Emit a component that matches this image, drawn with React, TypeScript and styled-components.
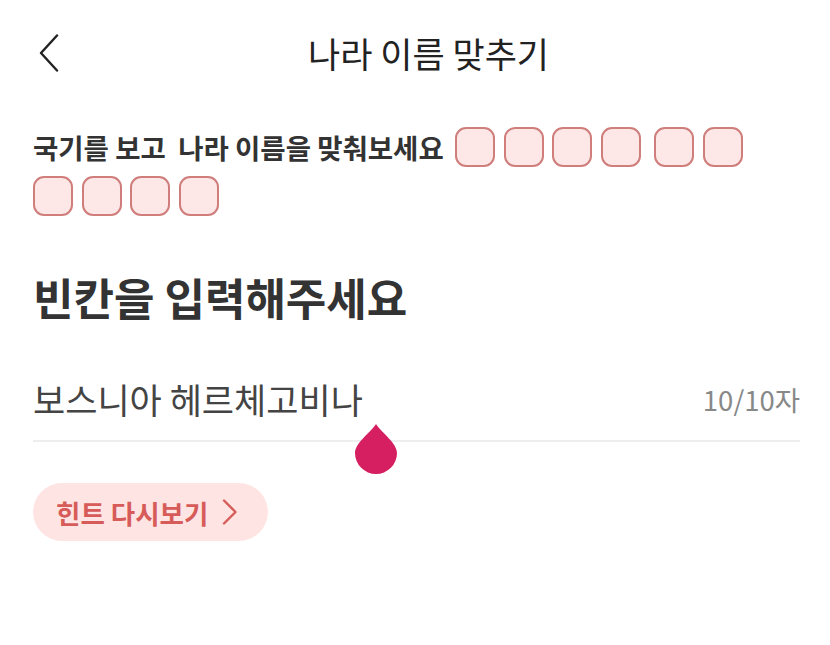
import styled, { createGlobalStyle } from 'styled-components';

const GlobalStyle = createGlobalStyle`
  html, body {
    margin: 0;
    padding: 0;
    background: #ffffff;
  }
  body {
    font-family: 'Noto Sans CJK KR', 'Noto Sans', sans-serif;
    color: #333333;
  }
`;

const answerWords = ['보스니아', '헤르체고비나'];

function App() {
  return (
    <Styled.Root>
      <GlobalStyle />
      <Styled.Header>
        <Styled.BackButton aria-label="뒤로가기">
          <svg width="20" height="38" viewBox="0 0 20 38" fill="none">
            <polyline points="18,1.5 2,19 18,36.5" stroke="#222" strokeWidth="2.4" strokeLinecap="round" strokeLinejoin="round" />
          </svg>
        </Styled.BackButton>
        <Styled.Title>나라 이름 맞추기</Styled.Title>
      </Styled.Header>

      <Styled.Body>
        <Styled.QuizRow>
          <Styled.Question>국기를 보고&nbsp; 나라 이름을 맞춰보세요</Styled.Question>
          {answerWords.map((word, wi) =>
            Array.from(word).map((_, ci) => <Styled.Blank key={`${wi}-${ci}`} wordStart={wi > 0 && ci === 0} />)
          )}
        </Styled.QuizRow>

        <Styled.Heading>빈칸을 입력해주세요</Styled.Heading>

        <Styled.InputField>
          <Styled.InputText>보스니아 헤르체고비나</Styled.InputText>
          <Styled.Counter>10/10자</Styled.Counter>
          <Styled.Cursor>
            <svg width="42" height="50" viewBox="0 0 42 50">
              <path d="M21 0 C27 9 42 19 42 29 A21 21 0 0 1 0 29 C0 19 15 9 21 0 Z" fill="#d51f60" />
            </svg>
          </Styled.Cursor>
        </Styled.InputField>

        <Styled.HintButton>
          힌트 다시보기
          <svg width="16" height="26" viewBox="0 0 16 26" fill="none">
            <polyline points="2,1.5 13.5,13 2,24.5" stroke="#d65b59" strokeWidth="2.4" strokeLinecap="round" strokeLinejoin="round" />
          </svg>
        </Styled.HintButton>
      </Styled.Body>
    </Styled.Root>
  );
}

export default App;

const Styled = {
  Root: styled.main`
    width: 830px;
    min-height: 645px;
    background: #ffffff;
  `,
  Header: styled.header`
    display: flex;
    align-items: center;
    height: 106px;
    padding: 0 37px 0 34px;
    box-sizing: border-box;
  `,
  BackButton: styled.button`
    display: flex;
    align-items: center;
    width: 30px;
    height: 50px;
    padding: 0 0 0 5px;
    border: none;
    background: none;
  `,
  Title: styled.h1`
    flex: 1;
    margin: 0;
    text-align: center;
    font-size: 35px;
    font-weight: 400;
    line-height: 44px;
    color: #222222;
  `,
  Body: styled.section`
    padding: 0 30px 0 33px;
  `,
  QuizRow: styled.div`
    display: flex;
    flex-wrap: wrap;
    align-items: center;
    column-gap: 8.5px;
    row-gap: 9px;
    max-width: 740px;
    margin-top: 21px;
  `,
  Question: styled.span`
    margin-right: 3px;
    font-size: 27.5px;
    font-weight: 700;
    line-height: 40px;
    color: #333333;
  `,
  Blank: styled.span<{ wordStart: boolean }>`
    width: 40px;
    height: 40px;
    box-sizing: border-box;
    margin-left: ${({ wordStart }) => (wordStart ? '5px' : '0')};
    border: 2px solid #cf7e7b;
    border-radius: 11px;
    background: #fde7e7;
  `,
  Heading: styled.h2`
    margin: 55px 0 0;
    font-size: 44px;
    font-weight: 700;
    line-height: 52px;
    color: #333333;
  `,
  InputField: styled.div`
    position: relative;
    display: flex;
    align-items: center;
    justify-content: space-between;
    margin-top: 56px;
    padding-bottom: 21px;
    border-bottom: 2px solid #eeeeee;
  `,
  InputText: styled.span`
    font-size: 35px;
    font-weight: 400;
    line-height: 40px;
    color: #444444;
  `,
  Counter: styled.span`
    font-size: 27.5px;
    font-weight: 400;
    line-height: 40px;
    color: #888888;
  `,
  Cursor: styled.span`
    position: absolute;
    left: 322px;
    top: 45px;
    display: block;
    line-height: 0;
  `,
  HintButton: styled.button`
    display: flex;
    align-items: center;
    gap: 14px;
    height: 58px;
    margin-top: 41px;
    padding: 0 30px 0 23px;
    border: none;
    border-radius: 29px;
    background: #fee5e4;
    font-family: 'Noto Sans CJK KR', 'Noto Sans', sans-serif;
    font-size: 26.5px;
    font-weight: 700;
    color: #d65b59;
  `,
};
